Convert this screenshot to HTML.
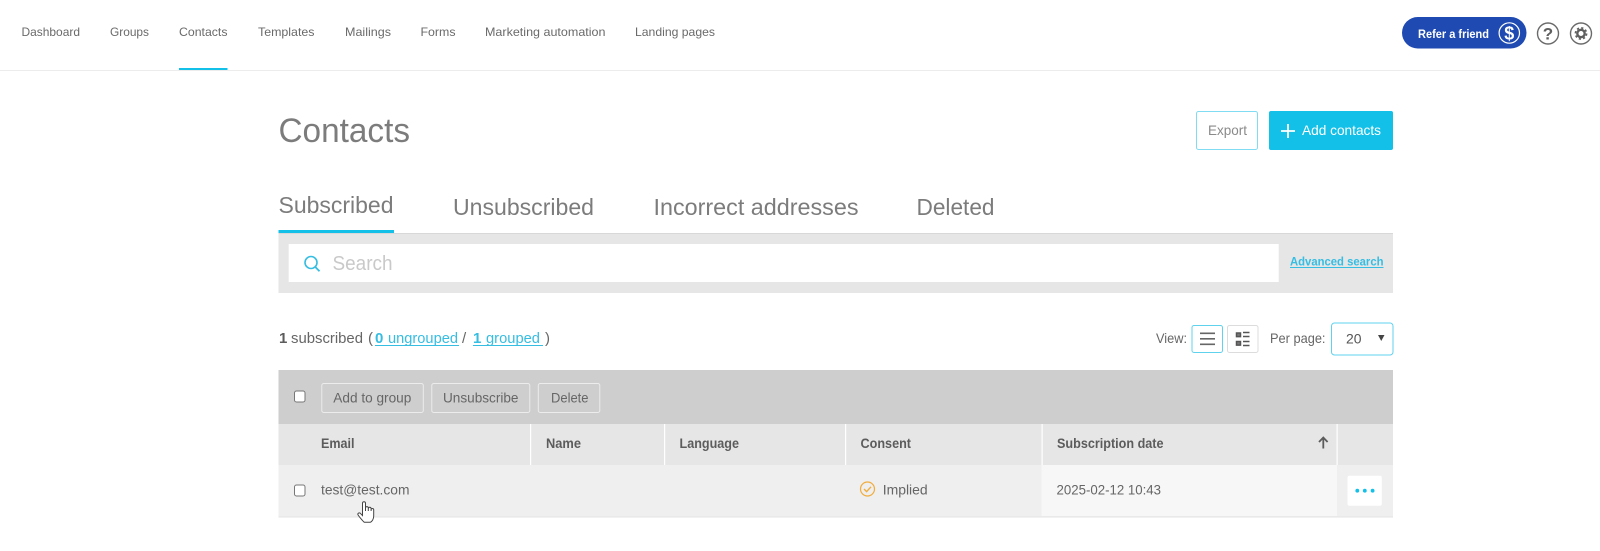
<!DOCTYPE html>
<html lang="en">
<head>
<meta charset="utf-8">
<title>Contacts</title>
<style>
html,body{margin:0;padding:0;background:#fff;width:1600px;height:551px;overflow:hidden}
svg{display:block}
text{font-family:"Liberation Sans",sans-serif;fill:#666;dominant-baseline:auto}
.n{font-size:12px;fill:#6a6a6a}
.t{font-size:23px;fill:#7c7c7c}
.s{font-size:14px;fill:#666}
.m{font-size:15px;fill:#666}
.b{font-size:14px;font-weight:bold;fill:#5c5c5c}
.l{font-size:15px;fill:#35bde2}
</style>
</head>
<body>
<svg width="1600" height="551" viewBox="0 0 1600 551" xmlns="http://www.w3.org/2000/svg">
<rect width="1600" height="551" fill="#fff"/>
<!-- nav -->
<text class="n" x="21.5" y="36" textLength="58.5" lengthAdjust="spacingAndGlyphs">Dashboard</text>
<text class="n" x="110" y="36" textLength="39" lengthAdjust="spacingAndGlyphs">Groups</text>
<text class="n" x="179" y="36" textLength="48.5" lengthAdjust="spacingAndGlyphs">Contacts</text>
<text class="n" x="258" y="36" textLength="56.5" lengthAdjust="spacingAndGlyphs">Templates</text>
<text class="n" x="345" y="36" textLength="46" lengthAdjust="spacingAndGlyphs">Mailings</text>
<text class="n" x="420.5" y="36" textLength="35" lengthAdjust="spacingAndGlyphs">Forms</text>
<text class="n" x="485" y="36" textLength="120.5" lengthAdjust="spacingAndGlyphs">Marketing automation</text>
<text class="n" x="635" y="36" textLength="80" lengthAdjust="spacingAndGlyphs">Landing pages</text>
<rect x="0" y="70" width="1600" height="1" fill="#ececec"/>
<rect x="179" y="68" width="48.5" height="2" fill="#13c0e8"/>
<!-- refer -->
<rect x="1402" y="17" width="124.5" height="31.5" rx="15.75" fill="#1e4ab2"/>
<text x="1418" y="38" font-size="12" font-weight="bold" style="fill:#fff" textLength="71" lengthAdjust="spacingAndGlyphs">Refer a friend</text>
<circle cx="1509.3" cy="33" r="10.2" fill="none" stroke="#fff" stroke-width="1.2"/>
<text x="1509.3" y="39.5" font-size="18" font-weight="bold" text-anchor="middle" style="fill:#fff">$</text>
<circle cx="1548" cy="33.5" r="10.5" fill="#fff" stroke="#6a6a6a" stroke-width="1.4"/>
<text x="1548" y="39.5" font-size="17" font-weight="bold" text-anchor="middle" style="fill:#5f5f5f">?</text>
<circle cx="1581" cy="33.5" r="10.5" fill="#fff" stroke="#6a6a6a" stroke-width="1.4"/>
<circle cx="1581" cy="33.5" r="3.7" fill="none" stroke="#5f5f5f" stroke-width="2.4"/>
<circle cx="1581" cy="33.5" r="5.6" fill="none" stroke="#5f5f5f" stroke-width="1.6" stroke-dasharray="2.2 2.2"/>
<!-- title -->
<text x="278.5" y="142" font-size="34" style="fill:#7c7c7c" textLength="131.5" lengthAdjust="spacingAndGlyphs">Contacts</text>
<rect x="1196.5" y="111.5" width="61" height="38" rx="2" fill="#fff" stroke="#7fdcf2"/>
<text x="1208" y="135" font-size="14" style="fill:#8a8a8a" textLength="39" lengthAdjust="spacingAndGlyphs">Export</text>
<rect x="1269" y="111" width="124" height="39" rx="2" fill="#13c0e8"/>
<path d="M1288 124v14M1281 131h14" stroke="#fff" stroke-width="1.8" fill="none"/>
<text x="1302" y="135" font-size="14" style="fill:#fff" textLength="79" lengthAdjust="spacingAndGlyphs">Add contacts</text>
<!-- tabs -->
<text class="t" x="278.5" y="213" textLength="115" lengthAdjust="spacingAndGlyphs">Subscribed</text>
<text class="t" x="453" y="215" textLength="141" lengthAdjust="spacingAndGlyphs">Unsubscribed</text>
<text class="t" x="653.5" y="215" textLength="205" lengthAdjust="spacingAndGlyphs">Incorrect addresses</text>
<text class="t" x="916.5" y="215" textLength="78" lengthAdjust="spacingAndGlyphs">Deleted</text>
<!-- search -->
<rect x="278.5" y="233" width="1114.5" height="60" fill="#e6e6e6"/>
<rect x="278.5" y="233" width="1114.5" height="1" fill="#d8d8d8"/>
<rect x="278.5" y="230" width="115.5" height="3" fill="#13c0e8"/>
<rect x="288.7" y="244" width="990" height="38" fill="#fff"/>
<circle cx="311" cy="262.5" r="6" fill="none" stroke="#35bde2" stroke-width="1.6"/>
<path d="M315.3 267l4.2 4.2" stroke="#35bde2" stroke-width="1.8" fill="none"/>
<text x="332.5" y="270" font-size="20" style="fill:#c9c9c9" textLength="60" lengthAdjust="spacingAndGlyphs">Search</text>
<text x="1290" y="265.5" font-size="12" font-weight="bold" style="fill:#35bde2" textLength="93.5" lengthAdjust="spacingAndGlyphs">Advanced search</text>
<rect x="1290" y="267" width="93.5" height="1" fill="#35bde2"/>
<!-- summary -->
<text x="279" y="343" font-size="15" font-weight="bold" style="fill:#5c5c5c">1</text>
<text class="m" x="291" y="343" textLength="72" lengthAdjust="spacingAndGlyphs">subscribed</text>
<text class="m" x="368" y="343">(</text>
<text class="l" x="375" y="343" style="font-weight:bold">0</text>
<text class="l" x="388" y="343" textLength="70" lengthAdjust="spacingAndGlyphs">ungrouped</text>
<rect x="375" y="345" width="84" height="1" fill="#35bde2"/>
<text class="m" x="462" y="343">/</text>
<text class="l" x="473" y="343" style="font-weight:bold">1</text>
<text class="l" x="486" y="343" textLength="54" lengthAdjust="spacingAndGlyphs">grouped</text>
<rect x="473" y="345" width="70" height="1" fill="#35bde2"/>
<text class="m" x="545" y="343">)</text>
<!-- view -->
<text class="s" x="1156" y="343" textLength="31" lengthAdjust="spacingAndGlyphs">View:</text>
<rect x="1192" y="325.5" width="30.5" height="27" rx="2" fill="#fff" stroke="#5fd2ee"/>
<path d="M1200 333.3h15M1200 338.8h15M1200 344.3h15" stroke="#666" stroke-width="1.6" fill="none"/>
<rect x="1227.5" y="325.5" width="30.5" height="27" rx="2" fill="#fff" stroke="#dcdcdc"/>
<path d="M1236.5 333h4v3.6h-4zM1236.5 341.5h4v3.6h-4z" fill="#777" stroke="#555" stroke-width="1.5"/>
<path d="M1243 332.5h6.5M1243 336.5h6.5M1243 341.5h6.5M1243 345.5h6.5" stroke="#555" stroke-width="1.4" fill="none"/>
<text class="s" x="1270" y="343" textLength="55.5" lengthAdjust="spacingAndGlyphs">Per page:</text>
<rect x="1331.5" y="323" width="61.5" height="32" rx="3" fill="#fff" stroke="#5fd2ee"/>
<text class="s" x="1346" y="343.5" textLength="15.5" lengthAdjust="spacingAndGlyphs" style="fill:#555">20</text>
<path d="M1378 335h6.5l-3.25 6z" fill="#444"/>
<!-- toolbar -->
<rect x="278.5" y="370" width="1114.5" height="54" fill="#cecece"/>
<rect x="294.5" y="391" width="10.5" height="11" rx="2" fill="#fff" stroke="#777" stroke-width="1"/>
<rect x="321.8" y="383.5" width="101.5" height="29" rx="2" fill="#cecece" stroke="#ececec"/>
<text class="s" x="333.3" y="402.5" textLength="78" lengthAdjust="spacingAndGlyphs">Add to group</text>
<rect x="431.8" y="383.5" width="98" height="29" rx="2" fill="#cecece" stroke="#ececec"/>
<text class="s" x="443" y="402.5" textLength="75.5" lengthAdjust="spacingAndGlyphs">Unsubscribe</text>
<rect x="538.3" y="383.5" width="61.5" height="29" rx="2" fill="#cecece" stroke="#ececec"/>
<text class="s" x="551" y="402.5" textLength="37.5" lengthAdjust="spacingAndGlyphs">Delete</text>
<!-- header -->
<rect x="278.5" y="424" width="1114.5" height="41" fill="#e6e6e6"/>
<rect x="530" y="424" width="1.2" height="41" fill="#fff"/>
<rect x="664" y="424" width="1.2" height="41" fill="#fff"/>
<rect x="845" y="424" width="1.2" height="41" fill="#fff"/>
<rect x="1041.5" y="424" width="1.2" height="41" fill="#fff"/>
<rect x="1336.5" y="424" width="1.2" height="41" fill="#fff"/>
<text class="b" x="321" y="448" textLength="33.5" lengthAdjust="spacingAndGlyphs">Email</text>
<text class="b" x="546" y="448" textLength="35" lengthAdjust="spacingAndGlyphs">Name</text>
<text class="b" x="679.5" y="448" textLength="59.5" lengthAdjust="spacingAndGlyphs">Language</text>
<text class="b" x="860.5" y="448" textLength="50.5" lengthAdjust="spacingAndGlyphs">Consent</text>
<text class="b" x="1057" y="448" textLength="106.5" lengthAdjust="spacingAndGlyphs">Subscription date</text>
<path d="M1323.3 448.5V438M1319 442l4.3-4.5 4.3 4.5" stroke="#5c5c5c" stroke-width="1.8" fill="none"/>
<!-- row -->
<rect x="278.5" y="465" width="1114.5" height="52" fill="#efefef"/>
<rect x="1041.5" y="465" width="295.5" height="51" fill="#f7f7f7"/>
<rect x="278.5" y="516.5" width="1114.5" height="1" fill="#e3e3e3"/>
<rect x="294.5" y="485" width="10.5" height="11" rx="2" fill="#fff" stroke="#777" stroke-width="1"/>
<text class="s" x="321" y="494.5" textLength="88.5" lengthAdjust="spacingAndGlyphs">test@test.com</text>
<circle cx="867.5" cy="489" r="7" fill="none" stroke="#f0ad3e" stroke-width="1.2"/>
<path d="M864 489l2.6 2.6 4.4-4.8" stroke="#f0ad3e" stroke-width="1.4" fill="none"/>
<text class="s" x="882.7" y="494.5" textLength="45" lengthAdjust="spacingAndGlyphs">Implied</text>
<text class="s" x="1056.5" y="494.5" textLength="104.5" lengthAdjust="spacingAndGlyphs">2025-02-12 10:43</text>
<rect x="1347.5" y="475.7" width="34.3" height="30" rx="2" fill="#fff"/>
<circle cx="1357.3" cy="490.7" r="1.9" fill="#13c0e8"/>
<circle cx="1364.8" cy="490.7" r="1.9" fill="#13c0e8"/>
<circle cx="1372.6" cy="490.7" r="1.9" fill="#13c0e8"/>
<!-- cursor -->
<path d="M362.5 515.5V503.3a1.5 1.5 0 0 1 3 0V511v-3a1.4 1.4 0 0 1 2.8 0v3-2.3a1.4 1.4 0 0 1 2.8 0V511v-1.2a1.3 1.3 0 0 1 2.6 0v6.2c0 3-1.6 5.5-3.4 6.3h-6c-1.4-1-5-5.4-6.2-7.3-.9-1.5 1-2.8 2.2-1.7z" fill="#fff" stroke="#444" stroke-width="1"/>
</svg>
</body>
</html>
